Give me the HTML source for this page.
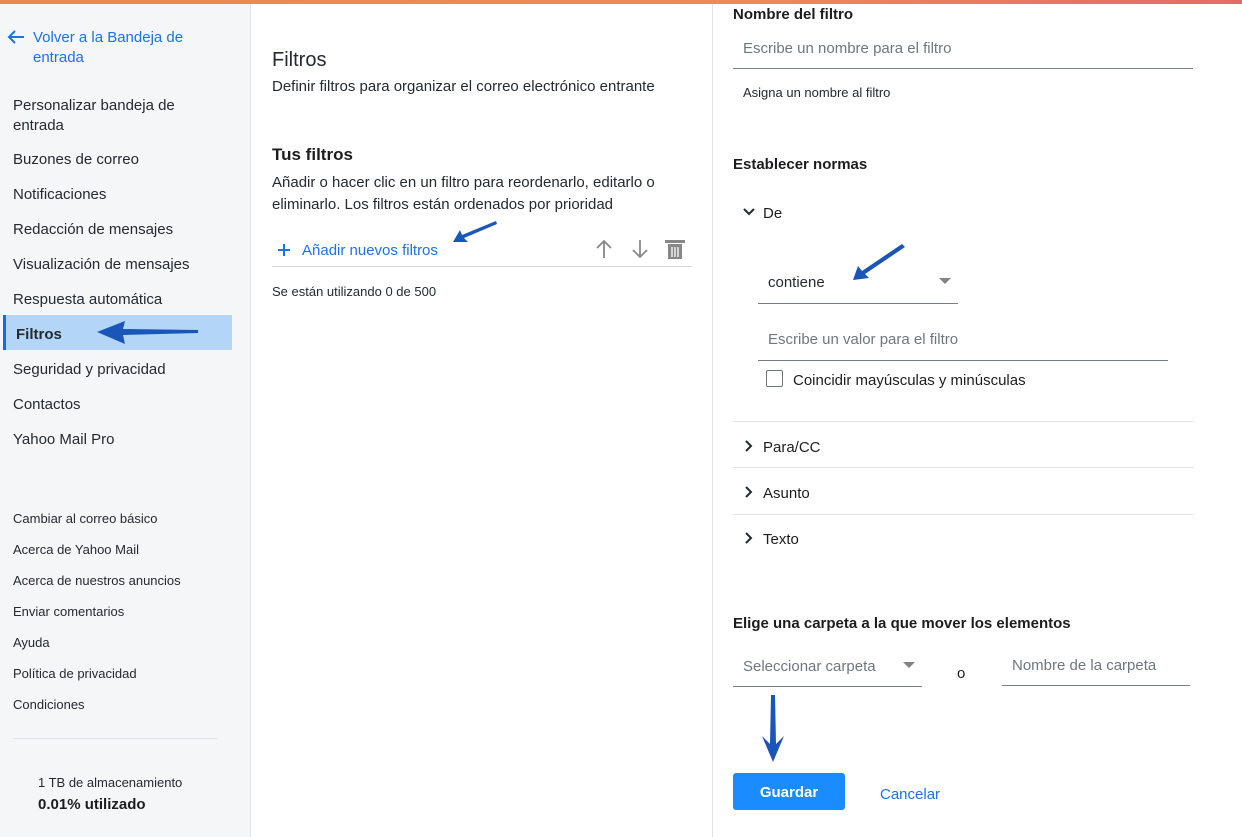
<!DOCTYPE html>
<html><head><meta charset="utf-8"><style>
*{margin:0;padding:0;box-sizing:border-box}
body{width:1242px;height:837px;position:relative;overflow:hidden;background:#fff;font-family:"Liberation Sans",sans-serif;color:#1d1d1f}
.a{position:absolute;white-space:nowrap}
#top{position:absolute;left:0;top:0;width:1242px;height:4px;background:linear-gradient(90deg,#e98a4c,#ef8a58 60%,#e46a6a)}
#side{position:absolute;left:0;top:4px;width:251px;height:833px;background:#f5f6f8;border-right:1px solid #e0e3e7}
.nav{font-size:15px;color:#232a31;left:13px}
.small{font-size:13px;color:#232a31;left:13px}
.line{position:absolute;height:1px;background:#7a7f85}
.hr{position:absolute;height:1px;background:#e0e3e7}
</style></head><body>
<div id="top"></div>
<div id="side"></div>
<svg class="a" style="left:7px;top:30px" width="18" height="14"><path d="M2 7h15M8 1L2 7l6 6" fill="none" stroke="#1a73e8" stroke-width="2"/></svg>
<div class="a" style="left:33px;top:28px;font-size:15px;color:#1a73e8;line-height:20px">Volver a la Bandeja de<br>entrada</div>
<div class="a nav" style="top:96px;line-height:20px">Personalizar bandeja de<br>entrada</div>
<div class="a nav" style="top:151px">Buzones de correo</div>
<div class="a nav" style="top:186px">Notificaciones</div>
<div class="a nav" style="top:221px">Redacción de mensajes</div>
<div class="a nav" style="top:256px">Visualización de mensajes</div>
<div class="a nav" style="top:291px">Respuesta automática</div>
<div class="a" style="left:3px;top:315px;width:229px;height:35px;background:#b3d5f8;border-left:3px solid #0f69ff"></div>
<div class="a nav" style="left:16px;top:326px;font-weight:bold">Filtros</div>
<svg class="a" style="left:95px;top:318px" width="105" height="28"><polygon points="2,14 30,3 28,11 103,12 103,15 28,17 30,26" fill="#1a56b8"/></svg>
<div class="a nav" style="top:361px">Seguridad y privacidad</div>
<div class="a nav" style="top:396px">Contactos</div>
<div class="a nav" style="top:431px">Yahoo Mail Pro</div>
<div class="a small" style="top:511px">Cambiar al correo básico</div>
<div class="a small" style="top:542px">Acerca de Yahoo Mail</div>
<div class="a small" style="top:573px">Acerca de nuestros anuncios</div>
<div class="a small" style="top:604px">Enviar comentarios</div>
<div class="a small" style="top:635px">Ayuda</div>
<div class="a small" style="top:666px">Política de privacidad</div>
<div class="a small" style="top:697px">Condiciones</div>
<div class="hr" style="left:13px;top:738px;width:204px"></div>
<div class="a" style="left:38px;top:775px;font-size:13px;color:#232a31">1 TB de almacenamiento</div>
<div class="a" style="left:38px;top:796px;font-size:15px;font-weight:bold">0.01% utilizado</div>

<div class="a" style="left:712px;top:4px;width:1px;height:833px;background:#e0e3e7"></div>
<div class="a" style="left:272px;top:49px;font-size:20px;color:#232a31">Filtros</div>
<div class="a" style="left:272px;top:78px;font-size:15px;color:#232a31">Definir filtros para organizar el correo electrónico entrante</div>
<div class="a" style="left:272px;top:145px;font-size:17px;font-weight:bold">Tus filtros</div>
<div class="a" style="left:272px;top:172px;font-size:15px;line-height:22px;color:#232a31">Añadir o hacer clic en un filtro para reordenarlo, editarlo o<br>eliminarlo. Los filtros están ordenados por prioridad</div>
<svg class="a" style="left:277px;top:243px" width="14" height="14"><path d="M7 1v12M1 7h12" stroke="#1a73e8" stroke-width="2"/></svg>
<div class="a" style="left:302px;top:242px;font-size:15px;color:#1a73e8">Añadir nuevos filtros</div>
<svg class="a" style="left:450px;top:220px" width="50" height="25"><polygon points="3,22 10,10 12,15 46,1 47,4 14,18 18,22" fill="#1a56b8"/></svg>
<svg class="a" style="left:594px;top:238px" width="95" height="22" fill="none" stroke="#888" stroke-width="1.8"><path d="M10 20V3M3 10l7-7 7 7M46 2v17M39 12l7 7 7-7"/><rect x="74" y="6" width="14" height="15" fill="#888" stroke="none"/><rect x="71" y="2" width="20" height="3" fill="#888" stroke="none"/><path d="M78 9v10M81 9v10M84 9v10" stroke="#fff" stroke-width="1.3"/></svg>
<div class="hr" style="left:272px;top:266px;width:420px;background:#d6d9dc"></div>
<div class="a" style="left:272px;top:284px;font-size:13px;color:#232a31">Se están utilizando 0 de 500</div>

<div class="a" style="left:733px;top:6px;font-size:15px;font-weight:bold">Nombre del filtro</div>
<div class="a" style="left:743px;top:40px;font-size:15px;color:#6e7780">Escribe un nombre para el filtro</div>
<div class="line" style="left:733px;top:68px;width:460px"></div>
<div class="a" style="left:743px;top:85px;font-size:13px;color:#232a31">Asigna un nombre al filtro</div>
<div class="a" style="left:733px;top:156px;font-size:15px;font-weight:bold">Establecer normas</div>
<svg class="a" style="left:742px;top:207px" width="14" height="10"><path d="M2 2l5 5 5-5" fill="none" stroke="#232a31" stroke-width="2"/></svg>
<div class="a" style="left:763px;top:205px;font-size:15px">De</div>
<div class="a" style="left:768px;top:274px;font-size:15px;color:#232a31">contiene</div>
<svg class="a" style="left:850px;top:242px" width="58" height="40"><polygon points="3,38 8,24 12,29 52,2 55,5 15,32 19,36" fill="#1a56b8"/></svg>
<svg class="a" style="left:938px;top:277px" width="14" height="8"><polygon points="1,1 13,1 7,7" fill="#808489"/></svg>
<div class="line" style="left:758px;top:303px;width:200px"></div>
<div class="a" style="left:768px;top:331px;font-size:15px;color:#6e7780">Escribe un valor para el filtro</div>
<div class="line" style="left:758px;top:360px;width:410px"></div>
<div class="a" style="left:766px;top:370px;width:17px;height:17px;border:1.5px solid #6e7780;border-radius:2px"></div>
<div class="a" style="left:793px;top:372px;font-size:15px">Coincidir mayúsculas y minúsculas</div>
<div class="hr" style="left:733px;top:421px;width:461px"></div>
<svg class="a" style="left:744px;top:439px" width="10" height="14"><path d="M2 2l5 5-5 5" fill="none" stroke="#232a31" stroke-width="2"/></svg>
<div class="a" style="left:763px;top:439px;font-size:15px">Para/CC</div>
<div class="hr" style="left:733px;top:467px;width:461px"></div>
<svg class="a" style="left:744px;top:485px" width="10" height="14"><path d="M2 2l5 5-5 5" fill="none" stroke="#232a31" stroke-width="2"/></svg>
<div class="a" style="left:763px;top:485px;font-size:15px">Asunto</div>
<div class="hr" style="left:733px;top:514px;width:461px"></div>
<svg class="a" style="left:744px;top:531px" width="10" height="14"><path d="M2 2l5 5-5 5" fill="none" stroke="#232a31" stroke-width="2"/></svg>
<div class="a" style="left:763px;top:531px;font-size:15px">Texto</div>
<div class="a" style="left:733px;top:615px;font-size:15px;font-weight:bold">Elige una carpeta a la que mover los elementos</div>
<div class="a" style="left:743px;top:658px;font-size:15px;color:#6e7780">Seleccionar carpeta</div>
<svg class="a" style="left:902px;top:661px" width="14" height="8"><polygon points="1,1 13,1 7,7" fill="#808489"/></svg>
<div class="line" style="left:733px;top:686px;width:189px"></div>
<div class="a" style="left:957px;top:665px;font-size:15px">o</div>
<div class="a" style="left:1012px;top:657px;font-size:15px;color:#6e7780">Nombre de la carpeta</div>
<div class="line" style="left:1002px;top:685px;width:188px"></div>
<svg class="a" style="left:758px;top:694px" width="30" height="70"><polygon points="13,1 17,1 18,50 26,42 15,68 4,42 12,50" fill="#1a56b8"/></svg>
<div class="a" style="left:733px;top:773px;width:112px;height:37px;background:#1a8cff;border-radius:3px;color:#fff;font-weight:bold;font-size:15px;text-align:center;line-height:40px">Guardar</div>
<div class="a" style="left:880px;top:786px;font-size:15px;color:#1a73e8">Cancelar</div>
</body></html>
